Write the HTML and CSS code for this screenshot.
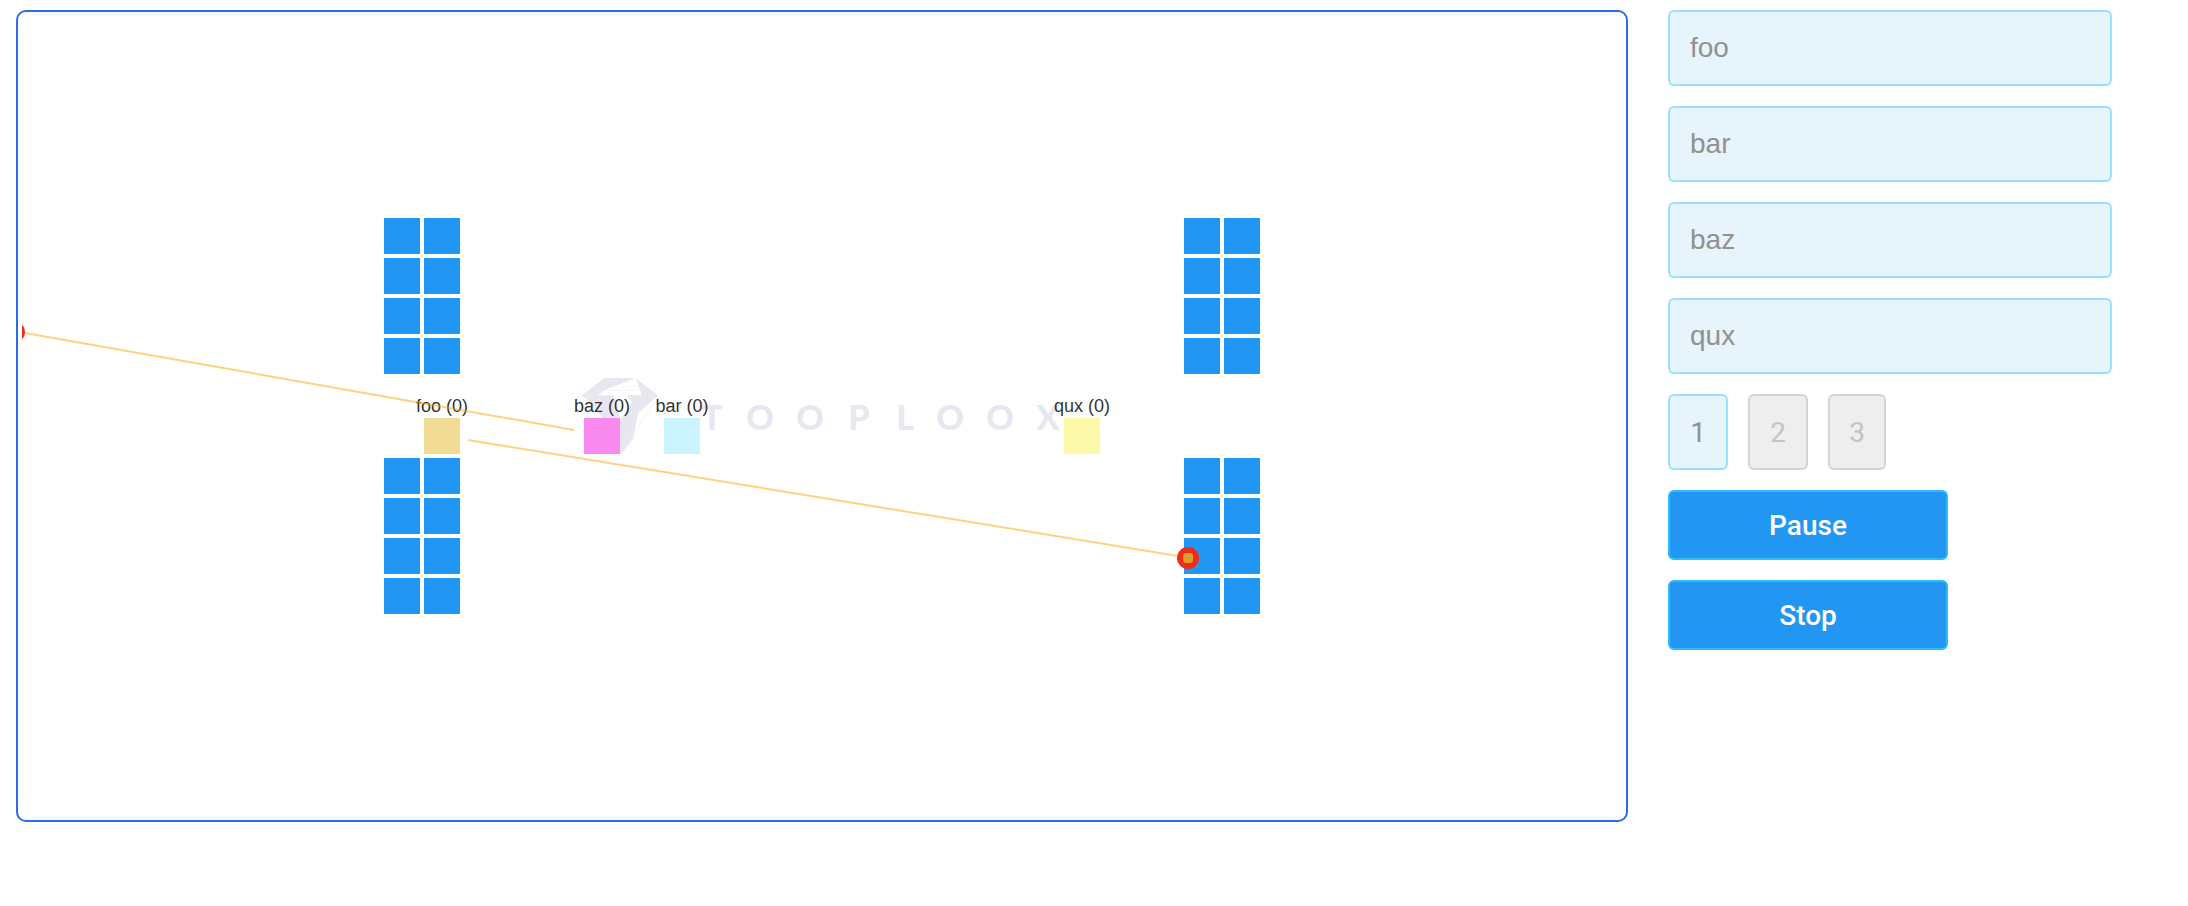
FILE: index.html
```html
<!DOCTYPE html>
<html lang="en">
<head>
<meta charset="utf-8">
<meta name="viewport" content="width=device-width, initial-scale=1">
<title>Tooploox arena</title>
<link rel="stylesheet" href="styles.css">
</head>
<body>
<div class="layout">
  <main class="board">
    <svg class="arena" viewBox="0 0 1600 800" role="img" aria-label="Game arena">
      <defs>
        <rect id="cell" width="36" height="36"/>
        <g id="wall">
          <use href="#cell" x="2" y="2"/><use href="#cell" x="42" y="2"/>
          <use href="#cell" x="2" y="42"/><use href="#cell" x="42" y="42"/>
          <use href="#cell" x="2" y="82"/><use href="#cell" x="42" y="82"/>
          <use href="#cell" x="2" y="122"/><use href="#cell" x="42" y="122"/>
        </g>
      </defs>
      <g class="brand">
        <svg x="560" y="362" width="77" height="78" viewBox="0 0 231 234">
          <path d="M0 52 68 0H160L73 34 46 52H93L110 95 114 130 64 125 30 75Z"/>
          <path d="M160 0 228 52 168 106 153 182 114 233V130L150 72 134 52H180Z"/>
          <path class="facet" d="M46 37H172M0 52 114 233 228 52"/>
        </svg>
        <text class="wordmark" y="414" x="690 738 788 837 883 928 978 1026">TOOPLOOX</text>
      </g>
      <g class="walls">
        <use href="#wall" x="360" y="200"/>
        <use href="#wall" x="1160" y="200"/>
        <use href="#wall" x="360" y="440"/>
        <use href="#wall" x="1160" y="440"/>
      </g>
      <g class="player">
        <use class="player-foo" href="#cell" x="402" y="402"/>
        <use class="player-baz" href="#cell" x="562" y="402"/>
        <use class="player-bar" href="#cell" x="642" y="402"/>
        <use class="player-qux" href="#cell" x="1042" y="402"/>
        <text x="420" y="396">foo (0)</text>
        <text x="580" y="396">baz (0)</text>
        <text x="660" y="396">bar (0)</text>
        <text x="1060" y="396">qux (0)</text>
      </g>
      <circle class="hit" cx="-8" cy="316" r="11"/>
      <circle class="hit" cx="1166" cy="542" r="11"/>
      <rect class="hit-core" x="1161" y="537" width="10" height="10" rx="3"/>
      <path class="beam" d="M3 317 552 414M446 424 1156 540"/>
    </svg>
  </main>
  <aside class="panel">
    <input class="name" type="text" value="foo" aria-label="Player 1">
    <input class="name" type="text" value="bar" aria-label="Player 2">
    <input class="name" type="text" value="baz" aria-label="Player 3">
    <input class="name" type="text" value="qux" aria-label="Player 4">
    <div class="speeds">
      <button class="speed active" type="button">1</button>
      <button class="speed" type="button">2</button>
      <button class="speed" type="button">3</button>
    </div>
    <button class="action" type="button">Pause</button>
    <button class="action" type="button">Stop</button>
  </aside>
</div>
</body>
</html>
```
FILE: styles.css
```css
* { box-sizing: border-box; }

body {
  margin: 0;
  background: #fff;
  font-family: "Liberation Sans", Arial, sans-serif;
}

.layout {
  display: grid;
  grid-template-columns: minmax(0, 1612fr) minmax(0, 444fr);
  gap: 40px;
  align-items: start;
  padding: 10px 76px 10px 16px;
}

.board {
  padding: 4px;
  border: 2px solid #2b6de8;
  border-radius: 10px;
}

.arena {
  display: block;
  width: 100%;
  height: auto;
}

.brand { fill: #e8e7f0; }

.facet {
  fill: none;
  stroke: #efeef4;
  stroke-width: 2;
}

.wordmark {
  font-family: Lato, sans-serif;
  font-size: 34px;
  font-weight: 900;
  text-anchor: middle;
}

.walls { fill: #2196f3; }

.player text {
  fill: #333;
  font-size: 18px;
  text-anchor: middle;
}

.player-foo { fill: #f2db94; }
.player-baz { fill: #fa8af0; }
.player-bar { fill: #ccf4ff; }
.player-qux { fill: #fbf9a9; }

.beam {
  fill: none;
  stroke: #ffa500;
  stroke-opacity: 0.5;
  stroke-width: 2;
}

.hit { fill: #f42a17; }
.hit-core { fill: #dba02c; }

.panel {
  display: flex;
  flex-direction: column;
  align-items: flex-start;
  gap: 20px;
}

.name,
.speed {
  height: 76px;
  border: 2px solid #97e0ff;
  border-radius: 6px;
  background: #e7f4fb;
  color: #919191;
  font-family: inherit;
  font-size: 28px;
}

.name {
  width: 100%;
  padding: 0 20px;
}

.speeds {
  display: flex;
  gap: 20px;
}

.speed {
  width: 60px;
  padding: 0;
  border-color: #d3d3d3;
  background: #eee;
  color: #c4c4c4;
  font-family: Roboto, sans-serif;
}

.speed:last-child { width: 58px; }

.speed.active {
  border-color: #97e0ff;
  background: #e7f4fb;
  color: #919191;
}

.action {
  width: 280px;
  max-width: 100%;
  height: 70px;
  border: 2px solid #2fbcff;
  border-radius: 6px;
  background: #2196f3;
  color: #fff;
  font-family: Roboto, sans-serif;
  font-size: 28px;
  font-weight: 500;
}
```
